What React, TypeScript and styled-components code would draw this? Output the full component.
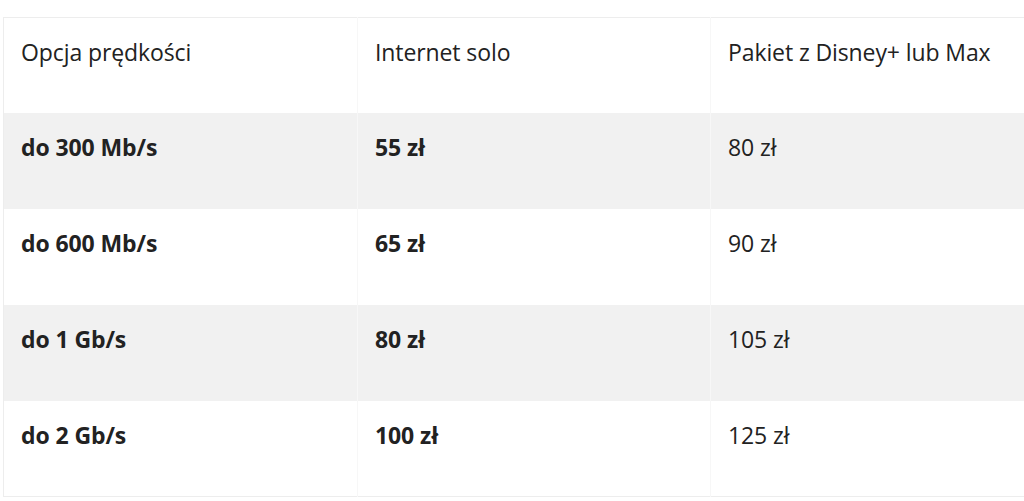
import React from "react";
import styled, { createGlobalStyle } from "styled-components";

const Global = createGlobalStyle`
  html, body { margin: 0; padding: 0; background: #ffffff; }
  body { font-family: "Open Sans", "Noto Sans", sans-serif; color: #222222; }
`;

const Wrap = styled.div`
  padding: 17px 0 0 3px;
  width: 1024px;
  box-sizing: border-box;
  overflow: hidden;
`;

const Table = styled.table`
  border-collapse: collapse;
  width: 1062px;
  table-layout: fixed;
  border: 1px solid #ededed;
`;

const Row = styled.tr<{ $shade?: boolean; $head?: boolean }>`
  background: ${(p) => (p.$shade ? "#f1f1f1" : "#ffffff")};
  height: ${(p) => (p.$head ? 95 : 96)}px;
`;

const Cell = styled.td<{ $bold?: boolean }>`
  vertical-align: top;
  padding: 21px 17px 0 17px;
  border-left: 1px solid #f7f7f7;
  font-size: 23px;
  line-height: 26px;
  font-weight: ${(p) => (p.$bold ? 700 : 400)};
  letter-spacing: -0.1px;
  box-sizing: border-box;
  white-space: nowrap;
  &:first-child { border-left: none; }
`;

const rows = [
  ["do 300 Mb/s", "55 zł", "80 zł"],
  ["do 600 Mb/s", "65 zł", "90 zł"],
  ["do 1 Gb/s", "80 zł", "105 zł"],
  ["do 2 Gb/s", "100 zł", "125 zł"],
];

export default function App() {
  return (
    <>
      <Global />
      <Wrap>
        <Table>
          <colgroup>
            <col style={{ width: 354 }} />
            <col style={{ width: 353 }} />
            <col style={{ width: 355 }} />
          </colgroup>
          <tbody>
            <Row $head>
              <Cell>Opcja prędkości</Cell>
              <Cell>Internet solo</Cell>
              <Cell>Pakiet z Disney+ lub Max</Cell>
            </Row>
            {rows.map((r, i) => (
              <Row key={r[0]} $shade={i % 2 === 0}>
                <Cell $bold>{r[0]}</Cell>
                <Cell $bold>{r[1]}</Cell>
                <Cell>{r[2]}</Cell>
              </Row>
            ))}
          </tbody>
        </Table>
      </Wrap>
    </>
  );
}
